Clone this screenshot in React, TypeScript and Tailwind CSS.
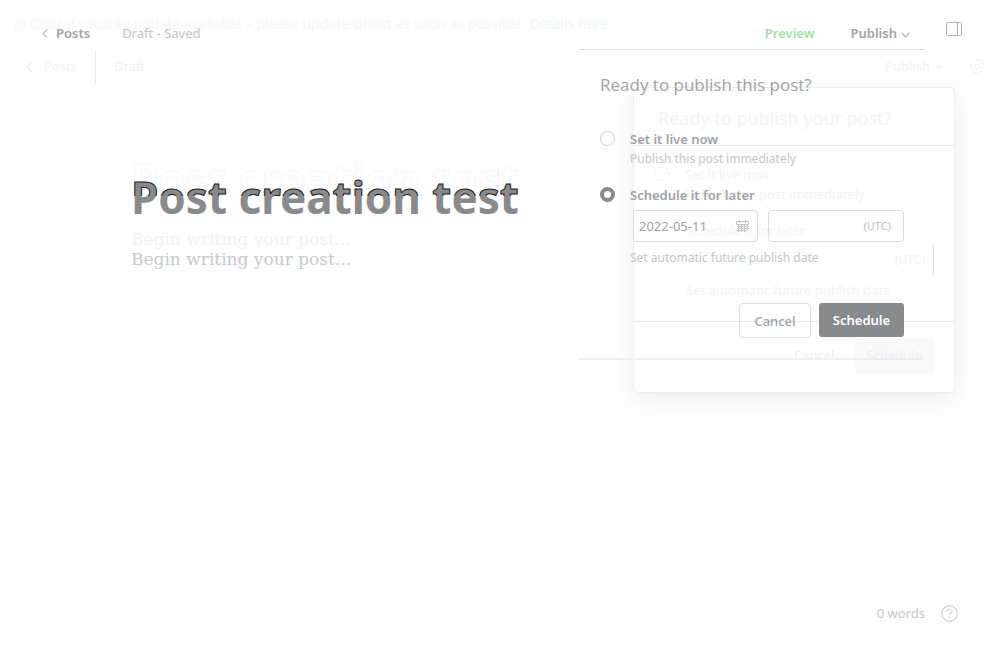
import React from "react";

function PanelIcon() {
  return (
    <svg width="16" height="15" viewBox="0 0 16 15" fill="none" stroke="#b0b2b4" aria-hidden="true">
      <rect x="0.5" y="0.5" width="15" height="13" rx="1" />
      <path d="M11.5 0.5v13" />
    </svg>
  );
}

function CalendarIcon() {
  return (
    <svg width="13" height="13" viewBox="0 0 13 13" fill="none" stroke="#c2c4c6" className="shrink-0" aria-hidden="true">
      <path d="M0.5 1.5h12v3h-12zM1.5 6.5h11M1.5 8.5h11M0.5 10.5h10M3.5 0v3M9.5 0v3M2.5 5v7M5.5 5v7M8.5 5v7M11.5 5v5" />
    </svg>
  );
}

function Chevron() {
  return (
    <svg width="9" height="6" viewBox="0 0 9 6" fill="none" stroke="#a6a8aa" strokeWidth="1.2" className="mt-1" aria-hidden="true">
      <path d="M0.8 0.8l3.7 4 3.7-4" />
    </svg>
  );
}

function Radio({ checked, id, name }: { checked: boolean; id: string; name: string }) {
  return (
    <input
      type="radio"
      id={id}
      name={name}
      defaultChecked={checked}
      className="mt-px size-[15px] shrink-0 appearance-none rounded-full border border-[#cccecf] bg-white checked:border-4 checked:border-[#888a8c]"
    />
  );
}

function FadedLayer() {
  return (
    <div aria-hidden="true" className="pointer-events-none absolute inset-0 overflow-hidden text-[#f6f6f7]">
      <p className="absolute top-[14px] left-[14px] text-sm whitespace-nowrap">
        ◎ Critical security update available – please update Ghost as soon as possible. <span className="text-[#eff6fb]">Details here</span>
      </p>
      <div className="absolute top-[50px] left-[26px] flex h-[34px] items-center text-[13px]">
        <span className="flex w-[69px] items-center gap-3 text-[#f1f4f8]">
          <svg width="6" height="10" viewBox="0 0 6 10" fill="none" stroke="#e9edf2" strokeWidth="1.2"><path d="M5 0.5L1 5l4 4.5" /></svg>
          Posts
        </span>
        <span className="h-full w-px bg-[#e5e9ed]" />
        <span className="pl-[18px] text-[#f0f0f1]">Draft</span>
      </div>
      <p className="absolute top-[57px] right-[58px] flex items-center gap-1.5 text-[13px] text-[#f1f5f8]">
        Publish
        <svg width="6" height="4" viewBox="0 0 6 4" fill="none" stroke="#e6eef4"><path d="M0.5 0.5l2.5 2.5 2.5-2.5" /></svg>
      </p>
      <svg width="15" height="15" viewBox="0 0 15 15" fill="none" stroke="#e6e6e7" strokeDasharray="2 2" className="absolute top-[59px] right-[15px]">
        <circle cx="7.5" cy="7.5" r="6.5" />
        <circle cx="7.5" cy="7.5" r="2.5" />
      </svg>
      <div className="absolute top-[152px] left-[131px] text-[44px] leading-[54px] font-bold whitespace-nowrap text-transparent [-webkit-text-stroke:1px_#f8f8f8]">Post creation test</div>
      <span className="absolute top-[166px] left-[498px] h-[22px] w-px bg-[#f0f0f0]" />
    </div>
  );
}

function FadedPanel() {
  return (
    <div aria-hidden="true" className="pointer-events-none absolute top-[87px] right-[45px] w-[322px] rounded border border-[#ebedef] text-[#f3f4f5] shadow-[0_6px_22px_rgba(0,0,0,0.07)]">
      <p className="border-b border-[#e8ecf0] pt-4 pb-[13px] pl-6 text-lg leading-7">Ready to publish your post?</p>
      <div className="flex h-[176px] flex-col border-b border-[#e5eaee] px-5 pt-[18px] text-[13px] leading-5">
        <div className="flex gap-4">
          <span className="mt-0.5 size-[15px] rounded-full border border-dashed border-[#e8edf2]" />
          <span>Set it live now<br />Publish this post immediately</span>
        </div>
        <div className="mt-4 pl-8">Schedule it for later</div>
        <div className="mt-1 ml-auto flex h-8 items-center rounded-r border-r border-[#dbe3e8] pr-2 pl-4 text-xs">(UTC)</div>
        <div className="pt-1 pl-8">Set automatic future publish date</div>
      </div>
      <div className="flex h-[70px] items-start justify-end gap-5 px-5 pt-4 text-[13px]">
        <span className="pt-2 text-[#eeeeef]">Cancel</span>
        <span className="rounded bg-[#f9f9f9] px-3 py-2 text-[#e9eff4]">Schedule</span>
      </div>
    </div>
  );
}

function PublishForm() {
  return (
    <form className="mr-[75px] w-[346px] rounded-br border-t border-b-2 border-t-[#dddedf] border-b-[#ededee] px-[21px] pt-[23px] pb-5">
      <h2 className="font-['Open_Sans',sans-serif] text-[17px] leading-6">Ready to publish this post?</h2>
      <div className="mt-[33px] flex gap-[15px]">
        <Radio checked={false} id="live" name="when" />
        <label htmlFor="live" className="-mt-px flex flex-col">
          <span className="text-[13px] leading-5 font-semibold">Set it live now</span>
          <span className="text-xs leading-5 text-[#c2c6ca]">Publish this post immediately</span>
        </label>
      </div>
      <div className="mt-[17px] flex gap-[15px]">
        <Radio checked id="later" name="when" />
        <label htmlFor="later" className="-mt-px text-[13px] leading-5 font-semibold">Schedule it for later</label>
      </div>
      <div className="mt-[5px] flex gap-[10px] pl-[33px]">
        <div className="flex h-8 w-[125px] items-center rounded-r border border-[#dcdddf] pr-2 pl-[5px]">
          <input aria-label="Date" defaultValue="2022-05-11" className="w-full min-w-0 bg-transparent pt-0.5 text-[13px] outline-none" />
          <CalendarIcon />
        </div>
        <div className="flex h-8 flex-1 items-center rounded border border-[#dcdddf] px-3">
          <input aria-label="Time" className="w-full min-w-0 bg-transparent text-[13px] outline-none" />
          <span className="text-[11px] text-[#bfc1c3]">(UTC)</span>
        </div>
      </div>
      <p className="mt-1.5 pl-[30px] text-xs leading-5 text-[#c2c6ca]">Set automatic future publish date</p>
      <div className="mt-[35px] flex justify-end gap-2 text-[13px] leading-[18px]">
        <button type="button" className="h-[35px] w-[72px] rounded border border-[#dfe0e2] font-medium">Cancel</button>
        <button type="button" className="h-[34px] w-[85px] rounded-[3px] bg-[#888a8c] font-semibold text-white">Schedule</button>
      </div>
    </form>
  );
}

export default function App() {
  return (
    <div className="relative flex min-h-screen flex-col bg-[#fefefe] font-['Noto_Sans',sans-serif] text-[#a0a2a5]">
      <FadedLayer />
      <FadedPanel />
      <header className="relative flex h-[49px] items-start justify-between pt-5 pr-[38px] pl-[42px]">
        <nav className="flex items-center gap-8 pt-1 text-[13px] leading-[18px]">
          <a href="#posts" className="flex items-center gap-2 font-semibold">
            <svg width="6" height="9" viewBox="0 0 6 9" fill="none" stroke="#888a8c" aria-hidden="true"><path d="M5 0.5L1 4.5l4 4" /></svg>
            Posts
          </a>
          <span className="text-[#bfc4ca]">Draft - Saved</span>
        </nav>
        <div className="flex items-start text-[13px] leading-[18px] font-semibold">
          <button className="mt-1 mr-9 text-[#a5dcac]">Preview</button>
          <button className="mt-1 mr-9 flex items-center gap-1">Publish <Chevron /></button>
          <button aria-label="Settings" className="mt-0.5"><PanelIcon /></button>
        </div>
      </header>

      <div className="relative flex flex-1 items-start justify-between">
        <main className="pt-[120px] pl-[131px]">
          <h1 className="relative text-[44px] leading-[56px] font-bold whitespace-nowrap text-[#888a8c]">
            Post creation test
            <span aria-hidden="true" className="absolute inset-x-0 top-0 h-[27px] overflow-hidden text-transparent [-webkit-text-stroke:1px_#202020]">Post creation test</span>
          </h1>
          <div className="relative">
            <p aria-hidden="true" className="absolute top-0 left-0 font-['DejaVu_Serif',serif] text-[17px] leading-7 whitespace-nowrap text-[#f2f2f3]">Begin writing your post...</p>
            <p className="pt-5 font-['DejaVu_Serif',serif] text-[17px] leading-7 whitespace-nowrap text-[#c6cacd]">Begin writing your post...</p>
          </div>
        </main>
        <PublishForm />
      </div>

      <footer className="relative flex items-center justify-end gap-4 pr-[42px] pb-[38px] text-[13px] leading-[18px] text-[#c4c8cc]">
        <span>0 words</span>
        <a href="#help" aria-label="Help">
          <svg width="17" height="17" viewBox="0 0 17 17" fill="none" stroke="#bcc1c6" aria-hidden="true">
            <circle cx="8.5" cy="8.5" r="7.8" />
            <path d="M6 6.5c0-3 5-3 5 0 0 1.8-2.5 1.6-2.5 3.5M8.5 11.8v1.2" />
          </svg>
        </a>
      </footer>
    </div>
  );
}
